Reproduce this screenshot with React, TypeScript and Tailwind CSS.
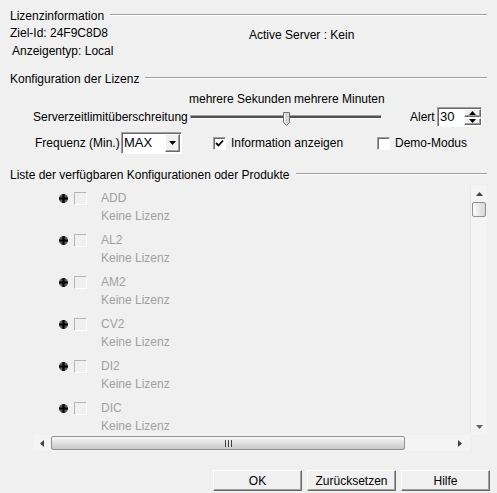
import React from "react";

const sunken =
  "border border-t-[#a0a0a0] border-l-[#a0a0a0] border-r-white border-b-white shadow-[inset_1px_1px_0_#696969]";
const raised =
  "border border-t-white border-l-white border-r-[#696969] border-b-[#696969] shadow-[inset_-1px_-1px_0_#a0a0a0] bg-[#f0f0f0]";

const GroupHeader = ({ title }: { title: string }) => (
  <div className="flex h-[16px] items-start pl-[10px] pr-[10px]">
    <span className="leading-[16px]">{title}</span>
    <div className="ml-[6px] mt-[6px] flex-1 border-t border-b border-t-[#a0a0a0] border-b-white" />
  </div>
);

const Check = ({ checked }: { checked?: boolean }) => (
  <div className={`flex h-[13px] w-[13px] items-center justify-center bg-white ${sunken}`}>
    {checked && (
      <svg width="9" height="9" viewBox="0 0 9 9">
        <path d="M1 4 L3.5 6.5 L8 1.5" fill="none" stroke="#000" strokeWidth="1.8" />
      </svg>
    )}
  </div>
);

const PlusIcon = () => (
  <svg width="11" height="11" viewBox="0 0 11 11">
    <circle cx="5.5" cy="5.5" r="4.5" fill="#5a5a5a" />
    <path d="M5.5 1 V10 M1 5.5 H10" stroke="#000" strokeWidth="2.2" />
  </svg>
);

const Triangle = ({ dir, color = "#000" }: { dir: "up" | "down" | "left" | "right"; color?: string }) => {
  const d = {
    up: "M0 4 L3.5 0 L7 4 Z",
    down: "M0 0 L7 0 L3.5 4 Z",
    left: "M4 0 L4 7 L0 3.5 Z",
    right: "M0 0 L0 7 L4 3.5 Z",
  }[dir];
  const w = dir === "up" || dir === "down" ? 7 : 4;
  const h = dir === "up" || dir === "down" ? 4 : 7;
  return (
    <svg width={w} height={h} viewBox={`0 0 ${w} ${h}`}>
      <path d={d} fill={color} />
    </svg>
  );
};

const products = ["ADD", "AL2", "AM2", "CV2", "DI2", "DIC"];

export default function App() {
  return (
    <div className="h-[493px] w-[497px] overflow-hidden bg-[#f0f0f0] pt-[8px] font-['Liberation_Sans',Arial,sans-serif] text-[12px] leading-[16px] text-black">
      <GroupHeader title="Lizenzinformation" />

      <div className="mt-[1px] flex h-[18px]">
        <span className="w-[249px] pl-[10px]">Ziel-Id: 24F9C8D8</span>
        <span className="pt-[2px]">Active Server : Kein</span>
      </div>
      <div className="h-[16px] pl-[12px]">Anzeigentyp: Local</div>

      <div className="mt-[12px]">
        <GroupHeader title="Konfiguration der Lizenz" />
      </div>

      <div className="mt-[4px] flex h-[16px] pl-[189px]">
        <span className="w-[105px]">mehrere Sekunden</span>
        <span>mehrere Minuten</span>
      </div>

      <div className="flex h-[20px] items-center">
        <span className="ml-[33px] w-[157px]">Serverzeitlimitüberschreitung</span>
        <div className="relative h-[20px] w-[192px]">
          <div className="mt-[8px] h-[4px] border border-t-[#a0a0a0] border-l-[#a0a0a0] border-r-white border-b-white bg-[#505050]" />
          <div className="absolute left-[93px] top-[5px]">
            <svg width="8" height="14" viewBox="0 0 8 14">
              <path d="M0.5 0.5 H6.5 V10.5 L3.5 13.5 L0.5 10.5 Z" fill="#d6d6d6" stroke="#707070" />
              <path d="M1.5 1.5 V10" stroke="#fff" />
            </svg>
          </div>
        </div>
        <span className="ml-[28px] w-[27px]">Alert</span>
        <div className={`flex h-[20px] w-[45px] bg-white ${sunken}`}>
          <span className="flex-1 pl-[2px] text-[13px] leading-[17px]">30</span>
          <div className="flex w-[17px] flex-col gap-[1px] pb-[1px] pt-[1px]">
            <div className={`flex flex-1 items-center justify-center ${raised}`}>
              <Triangle dir="up" />
            </div>
            <div className={`flex flex-1 items-center justify-center ${raised}`}>
              <Triangle dir="down" />
            </div>
          </div>
        </div>
      </div>

      <div className="mt-[5px] flex h-[22px] items-center">
        <span className="ml-[35px] w-[86px]">Frequenz (Min.)</span>
        <div className={`flex h-[22px] w-[61px] items-stretch bg-white ${sunken}`}>
          <span className="flex-1 pl-[2px] text-[13px] leading-[19px]">MAX</span>
          <div className={`m-[1px] flex w-[15px] items-center justify-center ${raised}`}>
            <Triangle dir="down" />
          </div>
        </div>
        <div className="ml-[31px] flex w-[164px] items-center">
          <Check checked />
          <span className="ml-[5px]">Information anzeigen</span>
        </div>
        <div className="flex items-center">
          <Check />
          <span className="ml-[5px]">Demo-Modus</span>
        </div>
      </div>

      <div className="mt-[13px]">
        <GroupHeader title="Liste der verfügbaren Konfigurationen oder Produkte" />
      </div>

      <div className="ml-[33px] mt-[2px] w-[454px]">
        <div className="flex h-[250px]">
          <div className="flex-1 overflow-hidden pt-[4px] text-[#a0a0a0]">
            {products.map((p) => (
              <div key={p} className="mb-[6px]">
                <div className="flex h-[18px] items-center">
                  <div className="ml-[25px]">
                    <PlusIcon />
                  </div>
                  <div className="ml-[5px] h-[13px] w-[13px] border border-t-[#b4b4b4] border-l-[#b4b4b4] border-r-white border-b-white" />
                  <span className="ml-[14px]">{p}</span>
                </div>
                <div className="h-[18px] pl-[68px] leading-[18px]">Keine Lizenz</div>
              </div>
            ))}
          </div>
          <div className="flex w-[17px] flex-col bg-[#f4f4f4] border-l border-l-[#e8e8e8]">
            <div className="flex h-[17px] items-center justify-center">
              <Triangle dir="up" color="#404040" />
            </div>
            <div className="mx-[1px] h-[15px] rounded-[2px] border border-[#8f8f8f] bg-gradient-to-r from-[#fafafa] to-[#d8d8d8]" />
            <div className="flex-1" />
            <div className="flex h-[17px] items-center justify-center">
              <Triangle dir="down" color="#606060" />
            </div>
          </div>
        </div>
        <div className="flex h-[16px]">
          <div className="flex w-[437px] items-center bg-[#f4f4f4]">
            <div className="flex w-[18px] justify-center">
              <Triangle dir="left" color="#404040" />
            </div>
            <div className="flex h-[14px] w-[354px] items-center justify-center rounded-[2px] border border-[#8f8f8f] bg-gradient-to-b from-[#f8f8f8] to-[#c8c8c8]">
              <svg width="9" height="7" viewBox="0 0 9 7">
                <path d="M1.5 0 V7 M4.5 0 V7 M7.5 0 V7" stroke="#404040" />
              </svg>
            </div>
            <div className="flex flex-1 justify-end pr-[8px]">
              <Triangle dir="right" color="#404040" />
            </div>
          </div>
        </div>
      </div>

      <div className="mt-[19px] flex gap-[5px] pl-[213px]">
        {["OK", "Zurücksetzen", "Hilfe"].map((b) => (
          <button key={b} className={`h-[21px] w-[89px] text-center leading-[18px] ${raised}`}>
            {b}
          </button>
        ))}
      </div>
    </div>
  );
}
